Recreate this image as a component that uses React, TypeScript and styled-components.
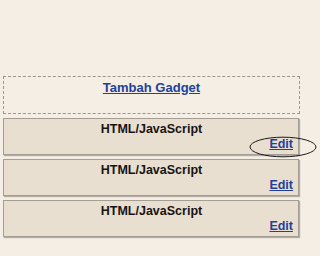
import * as React from 'react';
import styled, { createGlobalStyle } from 'styled-components';

const GlobalStyle = createGlobalStyle`
  html, body {
    margin: 0;
    padding: 0;
    background: #f5eee5;
  }
  body {
    font-family: "Liberation Sans", Arial, sans-serif;
  }
`;

const gadgets = ['HTML/JavaScript', 'HTML/JavaScript', 'HTML/JavaScript'];

const App = () => {
  return (
    <>
      <GlobalStyle />
      <Styled.Page>
        <Styled.Column>
          <Styled.AddBox>
            <Styled.Link href="#">Tambah Gadget</Styled.Link>
          </Styled.AddBox>
          {gadgets.map((title, i) => (
            <Styled.Widget key={i}>
              <Styled.Title>{title}</Styled.Title>
              <Styled.EditRow>
                <Styled.EditWrap>
                  <Styled.EditLink href="#">Edit</Styled.EditLink>
                  {i === 0 && (
                    <Styled.Circle width="68" height="22" viewBox="0 0 68 22">
                      <ellipse
                        cx="34"
                        cy="11"
                        rx="33"
                        ry="9.8"
                        fill="none"
                        stroke="#1a1a1a"
                        strokeWidth="1"
                      />
                    </Styled.Circle>
                  )}
                </Styled.EditWrap>
              </Styled.EditRow>
            </Styled.Widget>
          ))}
        </Styled.Column>
      </Styled.Page>
    </>
  );
};

const Styled = {
  Page: styled.div`
    width: 320px;
    height: 256px;
    overflow: hidden;
    padding: 76px 0 0 3px;
    box-sizing: border-box;
  `,
  Column: styled.div`
    width: 297px;
    display: flex;
    flex-direction: column;
    gap: 4px;
  `,
  AddBox: styled.div`
    height: 38px;
    box-sizing: border-box;
    border: 1px dashed #9a9590;
    display: flex;
    justify-content: center;
    align-items: flex-start;
    padding-top: 3px;
  `,
  Link: styled.a`
    font-size: 13px;
    font-weight: bold;
    line-height: 16px;
    color: #23409a;
    text-decoration: underline;
  `,
  Widget: styled.div`
    box-sizing: border-box;
    height: 37px;
    width: 296px;
    background: #e9dfd0;
    border: 1px solid #a39d94;
    box-shadow: 1px 1px 1px rgba(60, 50, 40, 0.35);
    padding: 2px 5px 0 6px;
    display: flex;
    flex-direction: column;
  `,
  Title: styled.div`
    font-size: 12.5px;
    font-weight: bold;
    line-height: 16px;
    color: #161412;
    text-align: center;
  `,
  EditRow: styled.div`
    display: flex;
    justify-content: flex-end;
    line-height: 12px;
  `,
  EditWrap: styled.span`
    position: relative;
  `,
  EditLink: styled.a`
    font-size: 12.5px;
    font-weight: bold;
    color: #23409a;
    text-decoration: underline;
  `,
  Circle: styled.svg`
    position: absolute;
    left: -20px;
    top: -1px;
    pointer-events: none;
  `,
};

export default App;
